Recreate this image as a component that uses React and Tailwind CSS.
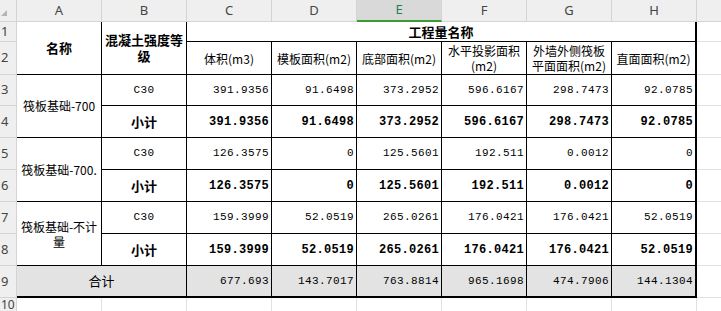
import React from "react";
import clsx from "clsx";

const colStart = ["", "col-start-1", "col-start-2", "col-start-3", "col-start-4", "col-start-5", "col-start-6", "col-start-7", "col-start-8", "col-start-9", "col-start-10"];
const rowStart = ["", "row-start-1", "row-start-2", "row-start-3", "row-start-4", "row-start-5", "row-start-6", "row-start-7", "row-start-8", "row-start-9", "row-start-10", "row-start-11"];

const cjk = "font-['Noto_Sans_CJK_SC',sans-serif]";
const mono = "font-['Liberation_Mono','Noto_Sans_CJK_SC',monospace]";

const letters = ["A", "B", "C", "D", "E", "F", "G", "H"];

const units = [
  ["体积(m3)"],
  ["模板面积(m2)"],
  ["底部面积(m2)"],
  ["水平投影面积", "(m2)"],
  ["外墙外侧筏板", "平面面积(m2)"],
  ["直面面积(m2)"],
];

// grid row, label, bold, values
const rows = [
  { r: 4, label: "C30", bold: false, vals: ["391.9356", "91.6498", "373.2952", "596.6167", "298.7473", "92.0785"] },
  { r: 5, label: "小计", bold: true, vals: ["391.9356", "91.6498", "373.2952", "596.6167", "298.7473", "92.0785"] },
  { r: 6, label: "C30", bold: false, vals: ["126.3575", "0", "125.5601", "192.511", "0.0012", "0"] },
  { r: 7, label: "小计", bold: true, vals: ["126.3575", "0", "125.5601", "192.511", "0.0012", "0"] },
  { r: 8, label: "C30", bold: false, vals: ["159.3999", "52.0519", "265.0261", "176.0421", "176.0421", "52.0519"] },
  { r: 9, label: "小计", bold: true, vals: ["159.3999", "52.0519", "265.0261", "176.0421", "176.0421", "52.0519"] },
];

const totals = ["677.693", "143.7017", "763.8814", "965.1698", "474.7906", "144.1304"];

const Cell = ({ c, r, className, children }) => (
  <div className={clsx(colStart[c], rowStart[r], "flex items-center overflow-hidden", className)}>
    {children}
  </div>
);

const tableCell = (c, extra) =>
  clsx("border-b border-r border-black", c === 9 && "border-r-2", extra);

const App = () => {
  return (
    <div className="grid h-[311px] w-[721px] grid-cols-[17px_repeat(8,85px)_1fr] grid-rows-[22px_20px_33px_31px_repeat(6,32px)_1fr] overflow-hidden bg-white text-black">
      {/* column header */}
      <Cell c={1} r={1} className="relative border-b border-r border-[#d4d4d4] bg-[#efefef]">
        <div className="absolute left-[1px] top-[10px] h-0 w-0 border-b-[6px] border-l-[6px] border-b-[#b5b5b5] border-l-transparent" />
      </Cell>
      {letters.map((l, i) => (
        <Cell
          key={l}
          c={i + 2}
          r={1}
          className={clsx(
            "justify-center font-['Noto_Sans',sans-serif] text-[13px]",
            l === "E"
              ? "border-b-2 border-r border-b-[#3d9a33] border-r-[#d4d4d4] bg-[#d9d9d9] text-[#1f7f52]"
              : "border-b border-r border-[#d4d4d4] bg-[#efefef] text-[#444]"
          )}
        >
          {l}
        </Cell>
      ))}
      <Cell c={10} r={1} className="border-b border-[#d4d4d4] bg-[#efefef]" />

      {/* row numbers */}
      {[1, 2, 3, 4, 5, 6, 7, 8, 9].map((n) => (
        <Cell
          key={n}
          c={1}
          r={n + 1}
          className="border-b border-r border-[#d4d4d4] bg-[#efefef] pl-[1px] font-['Noto_Sans',sans-serif] text-[13px] text-[#444]"
        >
          {n}
        </Cell>
      ))}
      <Cell c={1} r={11} className="items-start border-r border-[#d4d4d4] bg-[#efefef] pl-[1px] font-['Noto_Sans',sans-serif] text-[12px] leading-[13px] text-[#444]">
        10
      </Cell>

      {/* header rows */}
      <Cell c={2} r={2} className={clsx("row-span-2 justify-center text-[13px] font-bold", cjk, tableCell(2))}>
        名称
      </Cell>
      <Cell c={3} r={2} className={clsx("row-span-2 flex-col justify-center text-center text-[13px] font-bold leading-[16px]", cjk, tableCell(3))}>
        <span>混凝土强度等</span>
        <span>级</span>
      </Cell>
      <Cell c={4} r={2} className={clsx("col-span-6 justify-center text-[13px] font-bold", cjk, "border-b border-r-2 border-black")}>
        工程量名称
      </Cell>
      {units.map((u, i) => (
        <Cell
          key={i}
          c={i + 4}
          r={3}
          className={clsx("flex-col justify-center text-center text-[12px] leading-[15px]", cjk, tableCell(i + 4))}
        >
          {u.map((line) => (
            <span key={line}>{line}</span>
          ))}
        </Cell>
      ))}

      {/* names */}
      <Cell c={2} r={4} className={clsx("row-span-2 justify-center text-[12px]", cjk, tableCell(2))}>
        筏板基础-700
      </Cell>
      <Cell c={2} r={6} className={clsx("row-span-2 justify-center text-[12px]", cjk, tableCell(2))}>
        筏板基础-700.
      </Cell>
      <Cell c={2} r={8} className={clsx("row-span-2 flex-col justify-center text-center text-[12px] leading-[15px]", cjk, tableCell(2))}>
        <span>筏板基础-不计</span>
        <span>量</span>
      </Cell>

      {/* data rows */}
      {rows.map((row) => (
        <React.Fragment key={row.r}>
          <Cell
            c={3}
            r={row.r}
            className={clsx(
              "justify-center",
              row.bold ? clsx(cjk, "text-[13px] font-bold") : clsx(mono, "text-[11px] tracking-[0.4px]"),
              tableCell(3)
            )}
          >
            {row.label}
          </Cell>
          {row.vals.map((v, i) => (
            <Cell
              key={i}
              c={i + 4}
              r={row.r}
              className={clsx(
                "justify-end pr-[2px]",
                mono,
                row.bold ? "text-[12px] font-bold tracking-[0.3px]" : "text-[11px] tracking-[0.4px]",
                tableCell(i + 4)
              )}
            >
              {v}
            </Cell>
          ))}
        </React.Fragment>
      ))}

      {/* totals */}
      <Cell c={2} r={10} className={clsx("col-span-2 justify-center bg-[#e3e3e3] text-[13px]", cjk, "border-b-2 border-r border-black")}>
        合计
      </Cell>
      {totals.map((v, i) => (
        <Cell
          key={i}
          c={i + 4}
          r={10}
          className={clsx("justify-end bg-[#e3e3e3] pr-[2px] text-[11px] tracking-[0.4px]", mono, tableCell(i + 4, "border-b-2"))}
        >
          {v}
        </Cell>
      ))}

      {/* empty gridlines */}
      {[2, 3, 4, 5, 6, 7, 8, 9, 10].map((r) => (
        <Cell key={r} c={10} r={r} className="border-b border-[#e1e1e1]" />
      ))}
      {[2, 3, 4, 5, 6, 7, 8, 9].map((c) => (
        <Cell key={c} c={c} r={11} className="border-r border-[#e1e1e1]" />
      ))}
    </div>
  );
};

export default App;
